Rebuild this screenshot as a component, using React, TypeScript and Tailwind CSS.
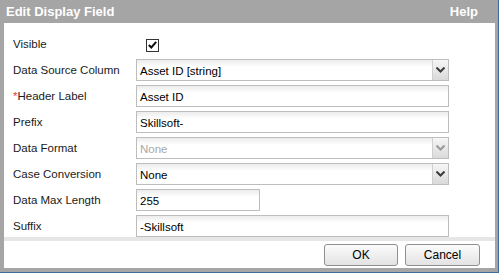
import React from 'react'

const font = { fontFamily: '"Liberation Sans", Arial, sans-serif' }

function Chevron({ disabled }: { disabled?: boolean }) {
  return (
    <svg width="9" height="6" viewBox="0 0 9 6">
      <path d="M0.5 0.5 L4.5 4.5 L8.5 0.5" fill="none" stroke={disabled ? '#9a9a9a' : '#3c3c3c'} strokeWidth="2" />
    </svg>
  )
}

function Field({ value, w = 'w-[313px]', select, disabled }: { value: string; w?: string; select?: boolean; disabled?: boolean }) {
  return (
    <div className={`${w} h-[22px] flex border border-[#bdbdbd] bg-[linear-gradient(to_bottom,#ececec,#ffffff_7px)]`}>
      <div className={`flex-1 pl-[3px] pt-[3px] text-[11.5px] leading-[16px] ${disabled ? 'text-[#a8a8a8]' : 'text-black'}`}>{value}</div>
      {select && (
        <div className="w-[16px] h-full border-l border-[#cfcfcf] bg-[linear-gradient(to_bottom,#f6f6f6,#dadada)] flex items-center justify-center">
          <Chevron disabled={disabled} />
        </div>
      )}
    </div>
  )
}

function Row({ label, required, children }: { label: string; required?: boolean; children: React.ReactNode }) {
  return (
    <div className="flex h-[22px] items-center">
      <div className="w-[123px] text-[11.5px] text-[#1a1a1a] leading-[14px]">
        {required && <span className="text-[#e23b3b]">*</span>}
        {label}
      </div>
      {children}
    </div>
  )
}

export default function App() {
  return (
    <div style={font} className="w-[499px] h-[273px] bg-[#a5a5a5] border-r border-b border-[#3f6b9b] flex flex-col">
      {/* title bar */}
      <div className="h-[23px] flex items-center justify-between pl-[6px] pr-[20px] text-white font-bold text-[13px]">
        <span>Edit Display Field</span>
        <span>Help</span>
      </div>

      <div className="flex-1 ml-[4px] mr-[3px] mb-[4px] bg-white flex flex-col">
        {/* form */}
        <div className="pt-[10px] pl-[9px] h-[214px] flex flex-col gap-[4px]">
          <Row label="Visible">
            <div className="ml-[10px] mt-[2px] w-[13px] h-[13px] border border-[#333] bg-white flex items-center justify-center">
              <svg width="9" height="8" viewBox="0 0 9 8">
                <path d="M0.8 4 L3.3 6.5 L8.2 0.8" fill="none" stroke="#111" strokeWidth="2" />
              </svg>
            </div>
          </Row>
          <Row label="Data Source Column">
            <Field value="Asset ID [string]" select />
          </Row>
          <Row label="Header Label" required>
            <Field value="Asset ID" />
          </Row>
          <Row label="Prefix">
            <Field value="Skillsoft-" />
          </Row>
          <Row label="Data Format">
            <Field value="None" select disabled />
          </Row>
          <Row label="Case Conversion">
            <Field value="None" select />
          </Row>
          <Row label="Data Max Length">
            <Field value="255" w="w-[124px]" />
          </Row>
          <Row label="Suffix">
            <Field value="-Skillsoft" />
          </Row>
        </div>

        <div className="h-[4px] bg-[#e6e6e6]" />

        {/* footer */}
        <div className="flex-1 flex justify-end pt-[3px] pr-[15px] gap-[7px]">
          <button className="w-[74px] h-[22px] rounded-[3px] border border-[#8f8f8f] bg-[linear-gradient(to_bottom,#fbfbfb,#e3e3e3)] text-[12px] text-black">
            OK
          </button>
          <button className="w-[75px] h-[22px] rounded-[3px] border border-[#8f8f8f] bg-[linear-gradient(to_bottom,#fbfbfb,#e3e3e3)] text-[12px] text-black">
            Cancel
          </button>
        </div>
      </div>
    </div>
  )
}
